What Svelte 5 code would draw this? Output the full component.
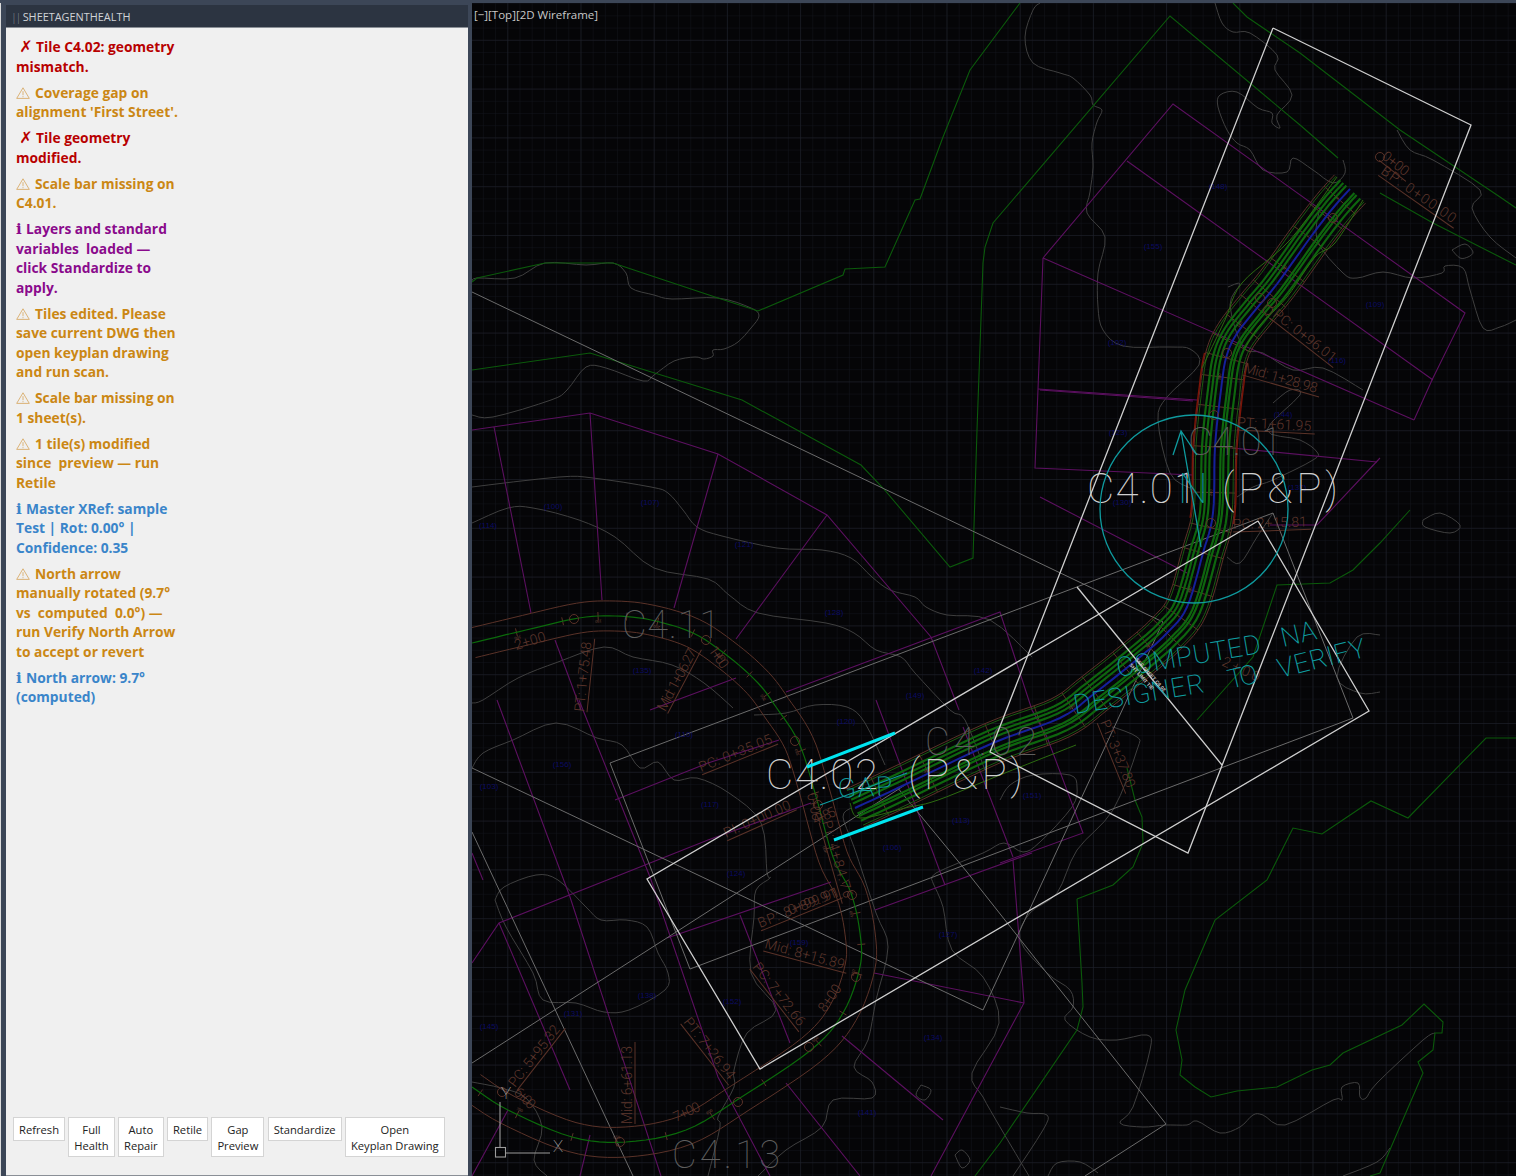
<script>
  const messages = [
    { kind: "err", text: "Tile C4.02: geometry\nmismatch." },
    { kind: "warn", text: "Coverage gap on\nalignment 'First Street'." },
    { kind: "err", text: "Tile geometry\nmodified." },
    { kind: "warn", text: "Scale bar missing on\nC4.01." },
    { kind: "note", text: "Layers and standard\nvariables  loaded —\nclick Standardize to\napply." },
    { kind: "warn", text: "Tiles edited. Please\nsave current DWG then\nopen keyplan drawing\nand run scan." },
    { kind: "warn", text: "Scale bar missing on\n1 sheet(s)." },
    { kind: "warn", text: "1 tile(s) modified\nsince  preview — run\nRetile" },
    { kind: "info", text: "Master XRef: sample\nTest | Rot: 0.00° |\nConfidence: 0.35" },
    { kind: "warn", text: "North arrow\nmanually rotated (9.7°\nvs  computed  0.0°) —\nrun Verify North Arrow\nto accept or revert" },
    { kind: "info", text: "North arrow: 9.7°\n(computed)" },
  ];

  const buttons = ["Refresh", "Full\nHealth", "Auto\nRepair", "Retile", "Gap\nPreview", "Standardize", "Open\nKeyplan Drawing"];

  const parse = (s) => s.trim().split(/\s+/).map((p) => p.split(",").map(Number));
  const str = (a) => a.map((p) => p[0].toFixed(1) + "," + p[1].toFixed(1)).join(" ");

  // catmull-rom sampling, good enough for roads and contours
  function curve(a, n = 6) {
    const out = [];
    for (let i = 0; i < a.length - 1; i++) {
      const p0 = a[Math.max(i - 1, 0)], p1 = a[i], p2 = a[i + 1], p3 = a[Math.min(i + 2, a.length - 1)];
      for (let k = 0; k < n; k++) {
        const t = k / n, t2 = t * t, t3 = t2 * t;
        out.push([0, 1].map((j) => 0.5 * (2 * p1[j] + (p2[j] - p0[j]) * t + (2 * p0[j] - 5 * p1[j] + 4 * p2[j] - p3[j]) * t2 + (3 * p1[j] - p0[j] - 3 * p2[j] + p3[j]) * t3)));
      }
    }
    out.push(a[a.length - 1]);
    return out;
  }

  function normalAt(a, i) {
    const p = a[Math.max(i - 1, 0)], q = a[Math.min(i + 1, a.length - 1)];
    const dx = q[0] - p[0], dy = q[1] - p[1], l = Math.hypot(dx, dy) || 1;
    return [-dy / l, dx / l];
  }
  const offset = (a, d) => a.map((p, i) => { const n = normalAt(a, i); return [p[0] + n[0] * d, p[1] + n[1] * d]; });

  function rungs(a, half, step) {
    const out = [];
    for (let i = step; i < a.length - 1; i += step) {
      const n = normalAt(a, i), p = a[i];
      out.push({ x1: p[0] - n[0] * half, y1: p[1] - n[1] * half, x2: p[0] + n[0] * half, y2: p[1] + n[1] * half, x: p[0], y: p[1], r: (Math.atan2(n[1], n[0]) * 180) / Math.PI + 90 });
    }
    return out;
  }

  const mainRoad = curve(parse("1350,189 1333,208 1310,238 1277,284 1257,308 1236,335 1226,358 1221,390 1215,447 1213,513 1203,553 1187,607 1167,633 1140,657 1095,693 1060,718 993,743 900,787 855,808"));
  const loopRoad = curve(parse("472,643 526,630 579,618 615,616 651,620 693,633 729,657 758,683 776,707 799,743 815,793 833,857 851,893 860,933 860,967 843,1013 811,1050 740,1098 686,1130 626,1142 572,1137 508,1110 472,1087"));

  const mainGreens = [-19, -14, -9, -6, 5, 9, 13, 19];
  const mainRungs = rungs(mainRoad, 21, 4);
  const loopRungs = rungs(loopRoad, 4, 5);
  const redEdges = [offset(mainRoad.slice(36, 56), -22), offset(mainRoad.slice(36, 56), 22)];

  const flares = [
    "1337,177 1290,240 1242,283 1225,320 1202,368",
    "1363,200 1335,243 1315,257 1287,297 1260,325 1245,348",
    "1076,745 1000,775 938,800 905,808 860,818 850,803",
  ].map((s) => curve(parse(s)));

  const greens = [
    "472,282 477,278 545,263 613,263 718,298 758,311 843,275 845,269 885,267 915,200 920,199 943,137 970,70 1020,3",
    "472,370 590,353 742,400 861,465 883,488 950,567 973,558 977,430 983,263 985,247 993,223 1170,16 1300,125 1338,158",
    "1380,193 1433,223 1500,257 1516,265",
    "1233,3 1247,17 1300,53 1400,130 1500,197 1516,208",
    "1516,738 1486,738 1408,818 1371,801 1322,834 1293,828 1267,880 1215,920 1185,990 1176,1030 1182,1060 1180,1075 1195,1087 1211,1097 1237,1091 1277,1087 1312,1070 1330,1065 1343,1053 1402,1025 1424,1004 1443,1022 1442,1033 1435,1033 1433,1050 1418,1062 1423,1073 1380,1173 1370,1176",
    "1077,899 1082,983 1083,1007 1077,1030 1000,1143 975,1176",
    "1127,768 1135,800 1142,817 1143,843 1133,867 1113,885 1077,899",
    "1197,720 1253,657 1277,585 1330,583 1353,570 1380,543 1410,510",
  ];

  const magentas = [
    "1043,258 1173,104 1465,313 1432,380 1414,420",
    "1127,161 1433,380",
    "1043,258 1414,420",
    "1043,258 1035,468 1193,475",
    "1038,389 1197,400",
    "1040,390 1193,401",
    "1040,497 1187,573",
    "1232,448 1377,462",
    "1380,458 1317,525 1270,525",
    "472,430 590,413 718,454 827,515 931,637 959,710",
    "494,427 531,613",
    "590,413 602,600",
    "718,454 674,608",
    "827,515 736,639",
    "555,640 581,710",
    "497,700 570,897 661,1176",
    "579,700 650,877 718,1077 770,1176",
    "472,853 483,880",
    "472,963 499,923 708,840 811,803",
    "499,923 570,1090",
    "615,800 708,763 779,740",
    "650,710 736,678",
    "786,692 1000,612 1032,710 1047,737 1083,833 1000,863",
    "1013,860 1024,1003 931,1176",
    "874,973 1024,1003",
    "842,1036 943,1120",
    "786,1083 860,1176",
    "667,938 831,882",
    "875,910 1032,853",
    "740,915 790,1043",
    "876,700 945,885",
    "963,727 1013,857",
    "472,1176 508,1110",
    "580,1176 590,1135",
  ];

  const contours = [
    "472,282 477,278 515,278 545,263 586,265 613,263 626,273 631,288 654,295 672,299 718,298 751,308 759,316 751,328 738,342 724,349 713,350 713,356 704,359 695,357 674,361 654,375 643,381 606,368 586,367 567,390 551,400 493,417 472,415",
    "472,487 559,477 593,478 651,487 668,493 683,510 697,527 722,536 777,548 822,550 851,558 872,577 890,590 915,597 926,607 947,615 990,620 1032,657",
    "472,523 508,508 533,508 579,520 615,537 654,568 708,579 729,595 758,613 826,623 854,633 876,650 901,657 915,673 950,710 965,720 985,770",
    "472,703 483,700 518,678 558,662 604,647 633,657 672,665 704,683 733,708",
    "472,768 483,753 513,740 556,723 597,738 622,745 640,768 658,762 674,780 697,778 729,793 761,823 767,873 770,878 756,890 754,917 751,973 776,1010 747,1033 734,1070 734,1087 718,1117 720,1127 708,1176",
    "495,900 504,887 536,875 558,880 586,907 601,920 626,920 647,927 658,953 668,973 665,990 629,1010 604,1012 576,1003 543,1000 533,973 506,927 495,900",
    "472,1082 501,1088 526,1098 542,1127 534,1160 547,1176",
    "851,808 843,817 854,847 876,913 888,947 876,1000 868,1040 854,1067 872,1082 872,1098 833,1100 822,1127 786,1150 758,1176",
    "754,715 786,713 815,705 847,707 865,723 885,765",
    "933,883 936,873 983,853 1004,843 1023,852 1040,842 1072,807 1077,787 1070,775 1033,775 1010,785 1000,800",
    "933,883 943,907 952,950 983,977 999,1023 972,1073 983,1097 1000,1127 1029,1176",
    "1113,727 1137,737 1137,750 1113,810 1077,850 1057,893 1030,913 1020,940 1047,973 1070,990 1073,1007 1065,1020 1090,1037 1117,1040 1147,1035 1150,1050 1133,1107 1120,1123 1143,1127 1165,1125 1187,1125 1197,1121 1220,1133 1240,1127 1253,1115 1263,1115 1285,1125 1333,1100 1342,1100 1342,1087 1358,1083 1360,1097 1366,1098 1377,1083 1423,1040 1435,1033",
    "1000,1107 1027,1113 1047,1115 1043,1130 1013,1176",
    "1048,1176 1057,1163 1080,1162 1098,1173",
    "1343,1176 1377,1162 1390,1148",
    "1040,3 1033,10 1025,37 1033,63 1060,73 1073,78 1090,95 1093,105 1102,110 1097,122 1092,143 1093,167 1090,192 1087,213 1105,237 1098,273 1098,307 1103,330 1123,346 1170,347 1190,349 1199,365 1167,397 1158,420 1170,473 1190,488",
    "1215,3 1222,23 1233,32 1250,33 1277,55 1275,70 1292,95 1277,115 1280,128 1272,123 1272,113 1258,108 1237,92 1220,95 1218,107 1227,130 1237,143 1250,150 1263,170 1287,172 1293,158 1313,170 1333,183 1345,173 1343,160",
    "1397,130 1410,150 1433,160 1480,190 1472,208 1490,237 1516,258",
    "1320,207 1317,240 1343,273 1357,278 1383,272 1413,278 1442,273 1445,266 1463,268 1470,290 1483,328 1500,327 1516,320",
    "1452,250 1465,244 1473,252 1468,257 1460,258 1452,250",
    "1228,287 1240,284 1230,305 1243,347 1263,353 1293,370 1323,368 1363,390",
    "1273,403 1290,390 1300,395 1267,430 1300,440 1317,452 1313,460 1273,480 1253,487 1237,497",
    "1227,557 1240,563 1257,537 1273,513",
    "1380,635 1357,637 1337,677 1360,693 1380,692",
    "1423,520 1440,513 1460,525 1450,533 1425,527 1423,520",
    "921,1085 916,1095 925,1100 931,1090 921,1085",
    "955,1155 962,1150 970,1160 962,1168 955,1155",
  ].map((s) => str(curve(parse(s), 4)));

  const tiles = [
    "1273,513 1353,718 690,969 610,763 1273,513",
    "472,292 1163,622 983,1010 472,768",
    "472,832 633,1176",
    "472,1063 768,873 905,785",
    "897,787 967,872 1166,1124 1085,1176",
  ];

  const sheets = [
    "1273,28 1471,125 1188,853 990,752 1273,28",
    "1258,521 1369,711 760,1069 647,879 1258,521",
    "1077,587 1222,765",
  ];

  const ticks = "795,741 818,805 852,895 856,977 809,1047 738,1102 620,1142 502,1092 574,619 706,640 1214,415 1211,523 1333,218 1260,298 1272,303 1268,310 1227,353 1380,157";
  const tickCircles = parse(ticks);

  const blueTags = parse("553,509 650,505 488,528 744,547 834,615 642,673 983,673 915,698 562,767 489,789 684,737 710,807 736,876 573,1016 647,998 489,1029 732,1004 799,945 892,850 961,823 846,724 948,937 933,1040 867,1115 1218,189 1153,249 1117,345 1375,307 1337,363 1118,435 1122,505 1297,490 1283,417 1032,798");

  const stations = [
    { t: "BP:  0+00.00", x: 1380, y: 173, r: 35, len: 88 },
    { t: "0+00", x: 1381, y: 158, r: 38, len: 30 },
    { t: "PC:  0+96.01", x: 1272, y: 316, r: 38, len: 76 },
    { t: "Mid:  1+28.98", x: 1243, y: 372, r: 16, len: 76 },
    { t: "PT:  1+61.95", x: 1237, y: 427, r: 3, len: 74 },
    { t: "PC:  2+15.81", x: 1233, y: 529, r: -2, len: 74 },
    { t: "2+00", x: 1221, y: 665, r: 25, len: 40, bare: true },
    { t: "2+00", x: 516, y: 650, r: -17, len: 32, bare: true },
    { t: "PT:  1+75.48", x: 584, y: 712, r: -84, len: 70 },
    { t: "Mid:  1+06.27", x: 665, y: 712, r: -62, len: 68 },
    { t: "1+00", x: 708, y: 650, r: 55, len: 24, bare: true },
    { t: "PC:  0+35.05", x: 701, y: 772, r: -22, len: 78 },
    { t: "PI:  0+00.00", x: 726, y: 838, r: -24, len: 72 },
    { t: "0+00", x: 807, y: 794, r: 78, len: 28, bare: true },
    { t: "4+85", x: 815, y: 825, r: -24, len: 24, bare: true },
    { t: "PI:  4+84.76", x: 822, y: 822, r: 74, len: 80 },
    { t: "BP:  8+89.91", x: 760, y: 928, r: -22, len: 84 },
    { t: "0+99.91", x: 790, y: 915, r: -21, len: 54, bare: true },
    { t: "Mid:  8+15.89", x: 764, y: 948, r: 15, len: 82 },
    { t: "PC:  7+72.66", x: 752, y: 967, r: 52, len: 76 },
    { t: "8+00", x: 825, y: 1013, r: -55, len: 30, bare: true },
    { t: "PT:  7+26.94", x: 683, y: 1022, r: 52, len: 74 },
    { t: "7+00", x: 676, y: 1122, r: -25, len: 28, bare: true },
    { t: "Mid:  6+61.13", x: 632, y: 1124, r: -90, len: 78 },
    { t: "PC:  5+95.32", x: 515, y: 1088, r: -52, len: 74 },
    { t: "6+00", x: 513, y: 1093, r: 45, len: 24, bare: true },
    { t: "PT:  3+37.80", x: 1100, y: 722, r: 68, len: 72 },
  ];

  const bigText = [
    { t: "C4.01", x: 1188, y: 455, s: 38, len: 94, cls: "dim" },
    { t: "C4.11", x: 622, y: 638, s: 38, len: 98, cls: "dim" },
    { t: "C4.13", x: 672, y: 1168, s: 38, len: 108, cls: "dim" },
    { t: "C4.02", x: 925, y: 755, s: 38, len: 112, cls: "dim" },
    { t: "C4.01", x: 1087, y: 503, s: 42, len: 110, cls: "sheet" },
    { t: "(P&P)", x: 1222, y: 503, s: 42, len: 116, cls: "sheet" },
    { t: "C4.02", x: 766, y: 789, s: 42, len: 112, cls: "sheet" },
    { t: "(P&P)", x: 908, y: 789, s: 42, len: 115, cls: "sheet" },
  ];

  const callouts = [
    { t: "N", x: 1178, y: 503, r: 0, s: 42, len: 26, thin: true },
    { t: "COMPUTED", x: 1118, y: 677, r: -9.5, s: 27, len: 146 },
    { t: "NA", x: 1283, y: 647, r: -13, s: 27, len: 36 },
    { t: "DESIGNER", x: 1075, y: 714, r: -9.5, s: 27, len: 132 },
    { t: "TO", x: 1230, y: 689, r: -13, s: 27, len: 30 },
    { t: "VERIFY", x: 1280, y: 678, r: -14, s: 27, len: 90 },
    { t: "GAP", x: 838, y: 798, r: -3, s: 27, len: 55 },
  ];
</script>

<div class="app">
  <aside class="side">
    <header class="title"><span class="grip">||</span> SHEETAGENTHEALTH</header>
    <div class="panel">
      <div class="log">
        {#each messages as m}
          <p class="msg {m.kind}">{#if m.kind === "err"}<span class="cross">✗</span>{:else if m.kind === "warn"}<svg class="warn-icon" viewBox="0 0 14 12" aria-hidden="true"><path d="M7 .8 13.3 11.4H.7Z M7 4.2V8.2 M7 9.2V10.2" /></svg>{:else}<span class="i">i</span>{/if}{m.text}</p>
        {/each}
      </div>
      <div class="actions">
        {#each buttons as b}
          <button>{b}</button>
        {/each}
      </div>
    </div>
  </aside>

  <main class="view">
    <span class="vp-label">[−][Top][2D Wireframe]</span>
    <svg class="cad" viewBox="472 3 1044 1173" preserveAspectRatio="none">
      <defs>
        <pattern id="minor" x="873.3" y="39.8" width="12.2" height="12.2" patternUnits="userSpaceOnUse">
          <path d="M0 0H12.2M0 0V12.2" class="grid-minor" />
        </pattern>
        <pattern id="major" x="873.3" y="39.8" width="73.2" height="48.8" patternUnits="userSpaceOnUse">
          <path d="M0 0H73.2M0 0V48.8" class="grid-major" />
        </pattern>
      </defs>
      <rect x="472" y="3" width="1044" height="1173" fill="url(#minor)" />
      <rect x="472" y="3" width="1044" height="1173" fill="url(#major)" />

      <g class="contour">
        {#each contours as c}<polyline points={c} />{/each}
      </g>
      <g class="green">
        {#each greens as g}<polyline points={g} />{/each}
      </g>
      <g class="magenta">
        {#each magentas as m}<polyline points={m} />{/each}
      </g>
      <g class="tile">
        {#each tiles as t}<polyline points={t} />{/each}
      </g>

      <!-- loop road -->
      <g class="brown">
        <polyline points={str(offset(loopRoad, 15))} />
        <polyline points={str(offset(loopRoad, -15))} />
        {#each loopRungs as r}<line x1={r.x1} y1={r.y1} x2={r.x2} y2={r.y2} />{/each}
      </g>
      <polyline class="green centre" points={str(loopRoad)} />
      {#each loopRungs as r, i}
        {#if i % 2 === 0}
          <text class="tiny" transform="translate({r.x} {r.y}) rotate({r.r})" y="-4" text-anchor="middle">{i * 25 + 100}</text>
        {/if}
      {/each}

      <!-- main road -->
      <g class="brown">
        <polyline points={str(offset(mainRoad, 21))} />
        <polyline points={str(offset(mainRoad, -21))} />
        {#each mainRungs as r}<line x1={r.x1} y1={r.y1} x2={r.x2} y2={r.y2} />{/each}
      </g>
      {#each redEdges as e}<polyline class="red" points={str(e)} />{/each}
      {#each mainGreens as d}
        <polyline class="road-green" class:thin={Math.abs(d) === 19} points={str(offset(mainRoad, d))} />
      {/each}
      {#each flares as f}<polyline class="green flare" points={str(f)} />{/each}
      <polyline class="blue" points={str(mainRoad)} />
      {#each mainRungs as r, i}
        {#if i % 3 === 0}
          <text class="tiny" transform="translate({r.x} {r.y}) rotate({r.r})" y="-2" text-anchor="middle">{i * 20}</text>
        {/if}
      {/each}

      <g class="brown">
        {#each tickCircles as c}<circle cx={c[0]} cy={c[1]} r="4.5" />{/each}
      </g>
      {#each blueTags as b, i}
        <text class="tag" x={b[0]} y={b[1]} text-anchor="middle">({100 + (i * 7) % 60})</text>
      {/each}

      {#each stations as s}
        <g transform="translate({s.x} {s.y}) rotate({s.r})">
          <text class="station" textLength={s.len}>{s.t}</text>
          {#if !s.bare}<line class="station-line" x1="0" y1="3" x2={s.len + 4} y2="3" />{/if}
        </g>
      {/each}

      {#each bigText as b}
        <text class={b.cls} x={b.x} y={b.y} font-size={b.s} textLength={b.len}>{b.t}</text>
      {/each}

      <!-- sheet frames -->
      <g class="sheet-line">
        {#each sheets as s}<polyline points={s} />{/each}
      </g>

      <!-- north arrow and gap markers -->
      <g class="teal">
        <circle cx="1194" cy="509" r="94" />
        <path d="M1173 455 1181 431 1197 455 M1181 431 1201 547" />
        <path d="M820 805 907 773" />
      </g>
      {#each callouts as c}
        <text class="callout" class:thin={c.thin} transform="translate({c.x} {c.y}) rotate({c.r})" font-size={c.s} textLength={c.len}>{c.t}</text>
      {/each}
      <path class="gap" d="M807 767 895 733 M834 840 923 807" />

      <!-- cut line label -->
      <g transform="translate(1135 660) rotate(48)">
        <text class="cut">SEE SHEET C4.02</text>
        <text class="cut" y="8">SHT LIMIT TIE</text>
      </g>

      <!-- ucs icon -->
      <g class="ucs">
        <path d="M500 1102V1147M505 1153H550" />
        <rect x="495.5" y="1147.5" width="10" height="9.5" />
      </g>
      <text class="ucs-letter" x="553" y="1152" font-size="17">X</text>
      <text class="ucs-letter" x="501" y="1099" font-size="17">Y</text>
    </svg>
  </main>
</div>

<style>
  :global(body) {
    margin: 0;
    background: #3c4657;
    font-family: "Open Sans", "Noto Sans", sans-serif;
  }
  .app {
    display: flex;
    height: 1176px;
    overflow: hidden;
    padding-top: 3px;
    box-sizing: border-box;
  }
  .side {
    width: 472px;
    flex: none;
    box-sizing: border-box;
    padding: 2px 4px 0 5px;
    display: flex;
    flex-direction: column;
    border-left: 1px solid #dcdcdc;
  }
  .title {
    height: 23px;
    flex: none;
    background: #2c3441;
    color: #d0d3d8;
    font-size: 10.9px;
    line-height: 23px;
    padding-left: 5px;
    border-bottom: 1px solid #8a8f96;
    box-sizing: border-box;
  }
  .grip {
    color: #8d939c;
    font-weight: 300;
    letter-spacing: -1.5px;
  }
  .panel {
    flex: 1;
    background: #f0f0f0;
    display: flex;
    flex-direction: column;
    min-height: 0;
    border-bottom: 1px solid #8a8f96;
  }
  .log {
    flex: 1;
    padding: 9px 0 0 10px;
  }
  .msg {
    margin: 0 0 6.5px;
    font-size: 13.8px;
    line-height: 19.5px;
    font-weight: 700;
    white-space: pre-wrap;
  }
  .err { color: #b80000; }
  .warn { color: #cb8714; }
  .note { color: #8a0a8c; }
  .info { color: #3a85ca; }
  .cross {
    font-family: "DejaVu Sans", sans-serif;
    font-size: 16px;
    font-weight: 700;
    line-height: 0;
    display: inline-block;
    width: 20px;
    text-align: center;
  }
  .warn-icon {
    width: 14px;
    height: 12px;
    margin-right: 5px;
    vertical-align: -1px;
    fill: none;
    stroke: #d8ab6a;
    stroke-width: 0.9;
  }
  .i {
    font-family: "DejaVu Serif", serif;
    font-size: 15px;
    font-weight: 700;
    line-height: 0;
    display: inline-block;
    width: 10px;
  }
  .actions {
    display: flex;
    align-items: flex-start;
    gap: 3.3px;
    padding: 0 0 18px 7px;
  }
  button {
    background: #fff;
    border: 1px solid #d4d4d4;
    padding: 4px 5px 2px;
    font: 11.2px/16px "Open Sans", "Noto Sans", sans-serif;
    color: #222;
    white-space: pre-line;
    text-align: center;
  }
  .view {
    flex: 1;
    position: relative;
    min-width: 0;
    background: #050507;
  }
  .vp-label {
    position: absolute;
    left: 2px;
    top: 4px;
    font-size: 11.5px;
    line-height: 16px;
    color: #c8c8c8;
  }
  .cad {
    display: block;
    width: 100%;
    height: 100%;
  }
  .cad polyline, .cad path, .cad line, .cad circle { fill: none; }
  .grid-minor { stroke: #12141b; stroke-width: 1; fill: none; }
  .grid-major { stroke: #1f222c; stroke-width: 1; fill: none; }
  .contour { stroke: #3f3f3f; stroke-width: 1; }
  .green { stroke: #0b5a0b; stroke-width: 1.1; }
  .green.centre { stroke: #0b6a0b; stroke-width: 1.2; fill: none; }
  .green.flare { stroke: #2c6a10; stroke-width: 1; fill: none; }
  .magenta { stroke: #5c1060; stroke-width: 1.1; }
  .tile { stroke: #6b6b6b; stroke-width: 1; }
  .brown { stroke: #5a3228; stroke-width: 1; }
  .red { stroke: #7c1408; stroke-width: 1.4; fill: none; }
  .road-green { stroke: #0e660e; stroke-width: 2.2; fill: none; }
  .road-green.thin { stroke: #1a5a10; stroke-width: 1; }
  .blue { stroke: #14209a; stroke-width: 2; fill: none; }
  .tiny {
    font: 4px "Liberation Sans", sans-serif;
    fill: #7a4a3c;
  }
  .tag {
    font: 8px "Liberation Sans", sans-serif;
    fill: #0b0b62;
  }
  .station {
    font: 300 14px "Roboto", "Liberation Sans", sans-serif;
    fill: #5e362c;
  }
  .station-line { stroke: #5a3228; stroke-width: 1; }
  .dim, .sheet, .callout, .ucs-letter {
    font-family: "Roboto", "Liberation Sans", sans-serif;
    font-weight: 100;
  }
  .dim { fill: #5e5e5e; }
  .sheet { fill: #cfcfcf; }
  .callout { fill: #0f9a9e; font-weight: 200; }
  .callout.thin { font-weight: 100; }
  .sheet-line { stroke: #cfcfcf; stroke-width: 1.3; }
  .teal { stroke: #0f9a9e; stroke-width: 1.3; }
  .gap { stroke: #00e5f0; stroke-width: 3; fill: none; }
  .cut {
    font: 700 5px "Liberation Sans", sans-serif;
    fill: #c8c8c8;
  }
  .ucs { stroke: #9c9c9c; stroke-width: 1.1; fill: none; }
  .ucs-letter { fill: #c0c0c0; }
</style>
